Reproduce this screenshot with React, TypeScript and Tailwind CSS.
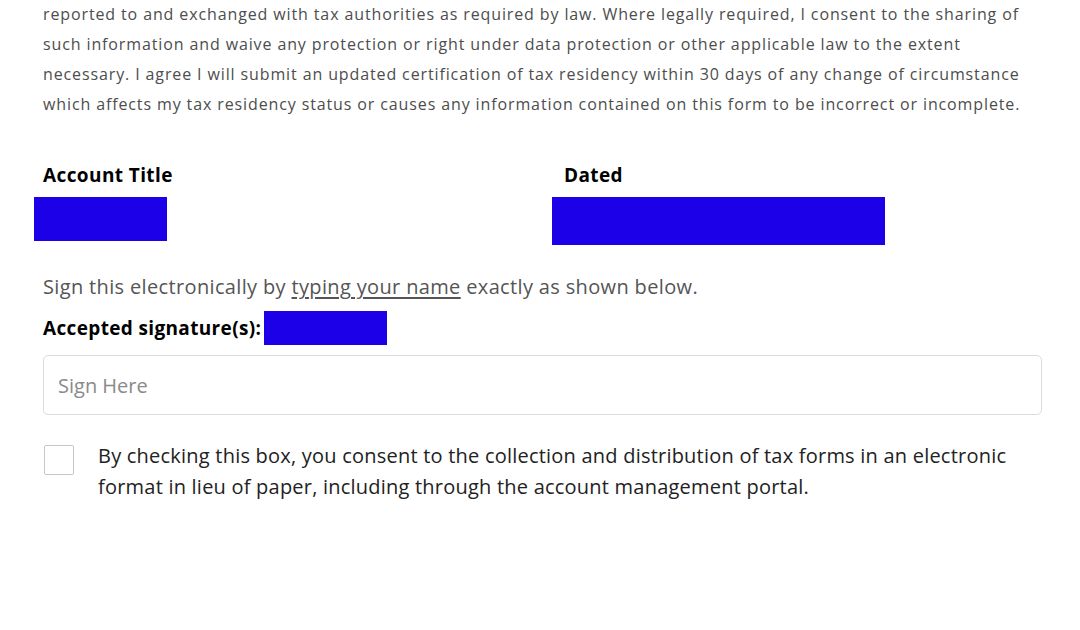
export default function App() {
  return (
    <div className="w-[1080px] h-[630px] overflow-hidden bg-white font-['Open_Sans',sans-serif]">
      <div className="pl-[43px] pr-[20px]">
        <p className="whitespace-nowrap text-[16px] leading-[30px] tracking-[0.88px] text-[#4d4d4d] -mt-[1px]">
          reported to and exchanged with tax authorities as required by law. Where legally required, I consent to the sharing of
          <br />
          such information and waive any protection or right under data protection or other applicable law to the extent
          <br />
          necessary. I agree I will submit an updated certification of tax residency within 30 days of any change of circumstance
          <br />
          which affects my tax residency status or causes any information contained on this form to be incorrect or incomplete.
        </p>

        <div className="mt-[44px] flex">
          <div className="w-[518px] -ml-[9px]">
            <div className="pl-[9px] text-[19px] font-bold leading-[24px] tracking-[0.4px] text-black">Account Title</div>
            <div className="mt-[10px] h-[44px] w-[133px] bg-[#1c00e8]" />
          </div>
          <div>
            <div className="pl-[12px] text-[19px] font-bold leading-[24px] tracking-[0.4px] text-black">Dated</div>
            <div className="mt-[10px] h-[48px] w-[333px] bg-[#1c00e8]" />
          </div>
        </div>

        <p className="mt-[29px] whitespace-nowrap text-[20px] leading-[26px] tracking-[0.35px] text-[#555]">
          Sign this electronically by <span className="underline underline-offset-[3px]">typing your name</span> exactly as shown below.
        </p>

        <div className="mt-[11px] flex items-center">
          <span className="text-[19px] font-bold leading-[34px] tracking-[0.35px] text-black">Accepted signature(s):</span>
          <span className="ml-[3px] h-[34px] w-[123px] bg-[#1c00e8]" />
        </div>

        <input
          type="text"
          placeholder="Sign Here"
          className="mt-[10px] block h-[60px] w-[999px] rounded-[5px] border border-[#dcdcdc] px-[14px] text-[20px] text-[#333] placeholder:text-[#8a8a8a] outline-none"
        />

        <label className="mt-[29px] flex items-start gap-[24px]">
          <span className="ml-[1px] mt-[1px] h-[30px] w-[30px] shrink-0 rounded-[2px] border border-[#c8c8c8] bg-white" />
          <span className="whitespace-nowrap text-[20px] leading-[31px] tracking-[0.22px] text-[#222] -mt-[4px]">
            By checking this box, you consent to the collection and distribution of tax forms in an electronic
            <br />
            format in lieu of paper, including through the account management portal.
          </span>
        </label>
      </div>
    </div>
  );
}
